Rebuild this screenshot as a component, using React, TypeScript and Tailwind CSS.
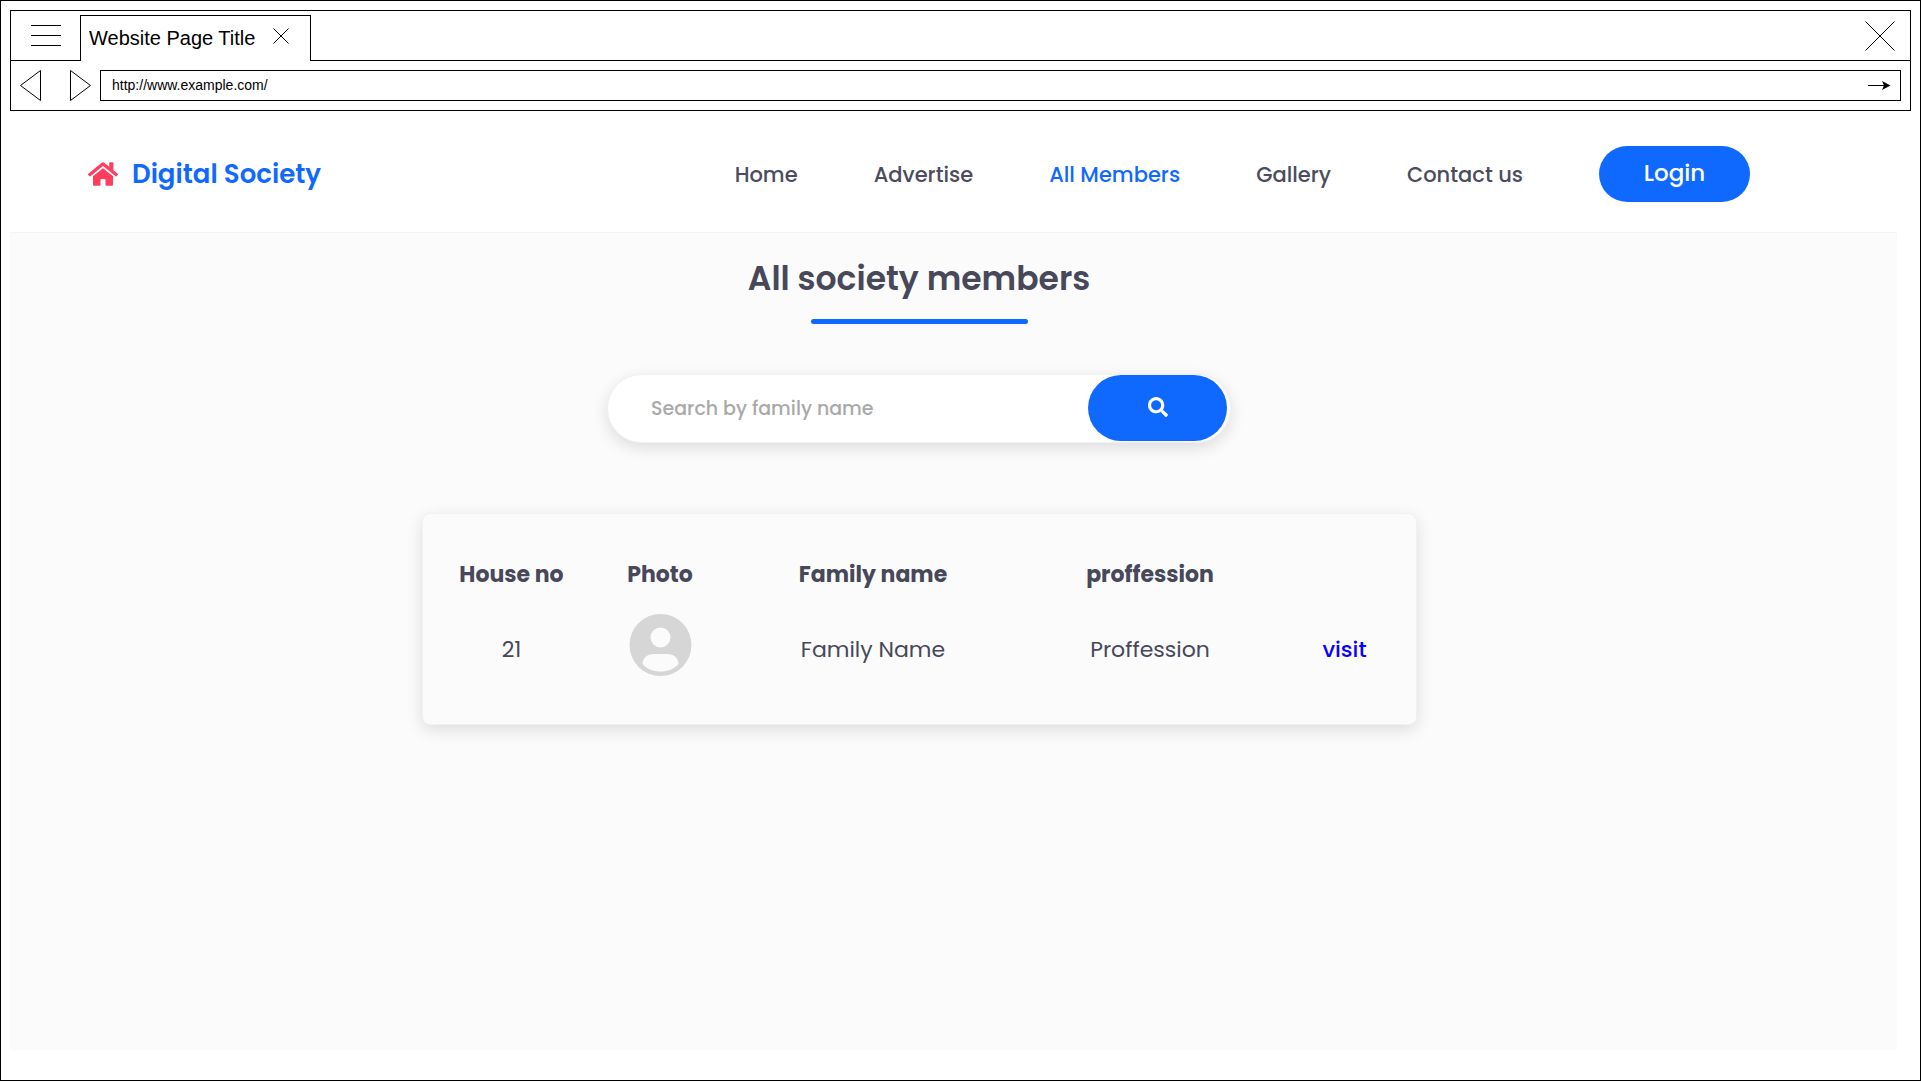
import React from "react";
import { FaHome, FaSearch } from "react-icons/fa";

const links = [
  { label: "Home", active: false },
  { label: "Advertise", active: false },
  { label: "All Members", active: true },
  { label: "Gallery", active: false },
  { label: "Contact us", active: false },
];

function BrowserBar() {
  return (
    <header className="border border-black font-['Liberation_Sans',Arial,sans-serif] text-black">
      <div className="flex h-[50px] items-stretch">
        <div className="flex w-[69px] items-center border-b border-black pl-5">
          <button type="button" aria-label="Menu" className="block h-[21px]">
            <svg width="30" height="21" viewBox="0 0 30 21" stroke="currentColor" fill="none">
              <path d="M0 .5H30M0 10.5H30M0 20.5H30" />
            </svg>
          </button>
        </div>
        <div className="mt-1 flex w-[231px] items-center border-x border-t border-black pb-[2px] pl-2">
          <span className="w-[184px] text-xl">Website Page Title</span>
          <button type="button" aria-label="Close tab" className="mb-1">
            <svg width="16" height="16" viewBox="0 0 16 16" stroke="currentColor" fill="none">
              <path d="M.5 .5L15.5 15.5M15.5 .5L.5 15.5" />
            </svg>
          </button>
        </div>
        <div className="flex flex-1 items-center justify-end border-b border-black pr-[15px]">
          <button type="button" aria-label="Close window">
            <svg width="30" height="30" viewBox="0 0 30 30" stroke="currentColor" fill="none">
              <path d="M.5 .5L29.5 29.5M29.5 .5L.5 29.5" />
            </svg>
          </button>
        </div>
      </div>
      <div className="flex h-[49px] items-center pr-[9px] pl-[9px]">
        <button type="button" aria-label="Back">
          <svg width="22" height="31" viewBox="0 0 22 31" stroke="currentColor" fill="none">
            <path d="M20.5 .5V30.5L.5 15.5Z" />
          </svg>
        </button>
        <button type="button" aria-label="Forward" className="ml-7">
          <svg width="22" height="31" viewBox="0 0 22 31" stroke="currentColor" fill="none">
            <path d="M.5 .5V30.5L20.5 15.5Z" />
          </svg>
        </button>
        <form className="ml-2 flex h-[31px] flex-1 items-center border border-black pr-[9px] pl-[11px]">
          <input
            type="text"
            aria-label="Address"
            defaultValue="http://www.example.com/"
            className="min-w-0 flex-1 bg-transparent pb-[2px] text-sm outline-none"
          />
          <button type="button" aria-label="Go">
            <svg width="23" height="9" viewBox="0 0 23 9">
              <path d="M0 4.5H16" stroke="currentColor" />
              <path d="M14 0L22.5 4.5L14 9L16 4.5Z" fill="currentColor" />
            </svg>
          </button>
        </form>
      </div>
    </header>
  );
}

function SiteNav() {
  return (
    <div className="flex h-[121px] items-center justify-between pt-1 pr-[147px] pl-[78px]">
      <a href="#home" className="flex items-center gap-[14px] pt-[2px] text-[26px] font-semibold text-[#1069ff]">
        <FaHome className="size-[30px] pb-[2px] text-[#ff3d5f]" />
        Digital Society
      </a>
      <nav className="flex items-center gap-[76px] text-[21px] font-medium text-[#4b4c5d]">
        {links.map((link) => (
          <a key={link.label} href="#nav" className={link.active ? "pt-[2px] text-[#1069ff]" : "pt-[2px]"}>
            {link.label}
          </a>
        ))}
        <button
          type="button"
          className="h-14 w-[151px] rounded-full bg-[#1069ff] text-[23px] font-medium text-white"
        >
          Login
        </button>
      </nav>
    </div>
  );
}

function Avatar() {
  return (
    <svg className="mx-auto" width="63" height="62" viewBox="0 0 62 62" role="img" aria-label="Member photo">
      <circle cx="31" cy="31" r="31" fill="#d6d6d6" />
      <circle cx="31" cy="23.5" r="10" fill="#fbfbfb" />
      <path
        d="M13 50C13 44 18 40 24 40H38C44 40 49 44 49 50C45 55 38 57.5 31 57.5C24 57.5 17 55 13 50Z"
        fill="#fbfbfb"
      />
    </svg>
  );
}

function MembersTable() {
  return (
    <div className="mx-auto mt-[70px] w-full max-w-[995px] rounded-lg border border-[#f1f1f1] bg-[#fbfbfb] px-[21px] pt-9 pb-[34px] shadow-[0_5px_16px_rgba(0,0,0,0.12)]">
      <table className="w-full table-fixed text-center text-[22px] leading-8 text-[#474859]">
        <colgroup>
          <col className="w-[136px]" />
          <col className="w-[161px]" />
          <col className="w-[265px]" />
          <col />
          <col className="w-[100px]" />
        </colgroup>
        <thead>
          <tr className="h-[50px]">
            <th scope="col">House no</th>
            <th scope="col">Photo</th>
            <th scope="col">Family name</th>
            <th scope="col">proffession</th>
            <td />
          </tr>
        </thead>
        <tbody>
          <tr className="h-[90px]">
            <td className="pt-[10px]">21</td>
            <td>
              <Avatar />
            </td>
            <td className="pt-[10px]">Family Name</td>
            <td className="pt-[10px]">Proffession</td>
            <td className="pt-[10px]">
              <a href="#visit" className="font-medium text-[#0a00ff]">
                visit
              </a>
            </td>
          </tr>
        </tbody>
      </table>
    </div>
  );
}

export default function App() {
  return (
    <div className="mb-px flex min-h-[calc(100vh-1px)] flex-col border border-black bg-white p-[9px] font-['Poppins',Inter,sans-serif]">
      <BrowserBar />
      <div className="mr-[14px] mb-[21px] flex flex-1 flex-col">
        <SiteNav />
        <main className="flex-1 border-t border-[#f3f3f3] bg-[#fbfbfb] pt-6 pr-[147px] pl-[78px]">
          <h1 className="text-center text-[33px] leading-[44px] font-semibold text-[#474859]">
            All society members
          </h1>
          <div className="mx-auto mt-[18px] h-[5px] w-[217px] rounded-full bg-[#1069ff]" />
          <form className="mx-auto mt-[50px] flex h-[69px] w-full max-w-[624px] rounded-full border border-[#f1f1f1] bg-white pr-[3px] pb-px pl-[43px] shadow-[0_5px_16px_rgba(0,0,0,0.12)]">
            <input
              type="text"
              aria-label="Search by family name"
              placeholder="Search by family name"
              className="min-w-0 flex-1 bg-transparent pt-[2px] text-[19px] font-medium outline-none placeholder:text-[#a9a9a9]"
            />
            <button
              type="button"
              aria-label="Search"
              className="flex w-[139px] items-center justify-center rounded-full bg-[#1069ff] pb-[2px] text-white"
            >
              <FaSearch className="size-5" />
            </button>
          </form>
          <MembersTable />
        </main>
      </div>
    </div>
  );
}
